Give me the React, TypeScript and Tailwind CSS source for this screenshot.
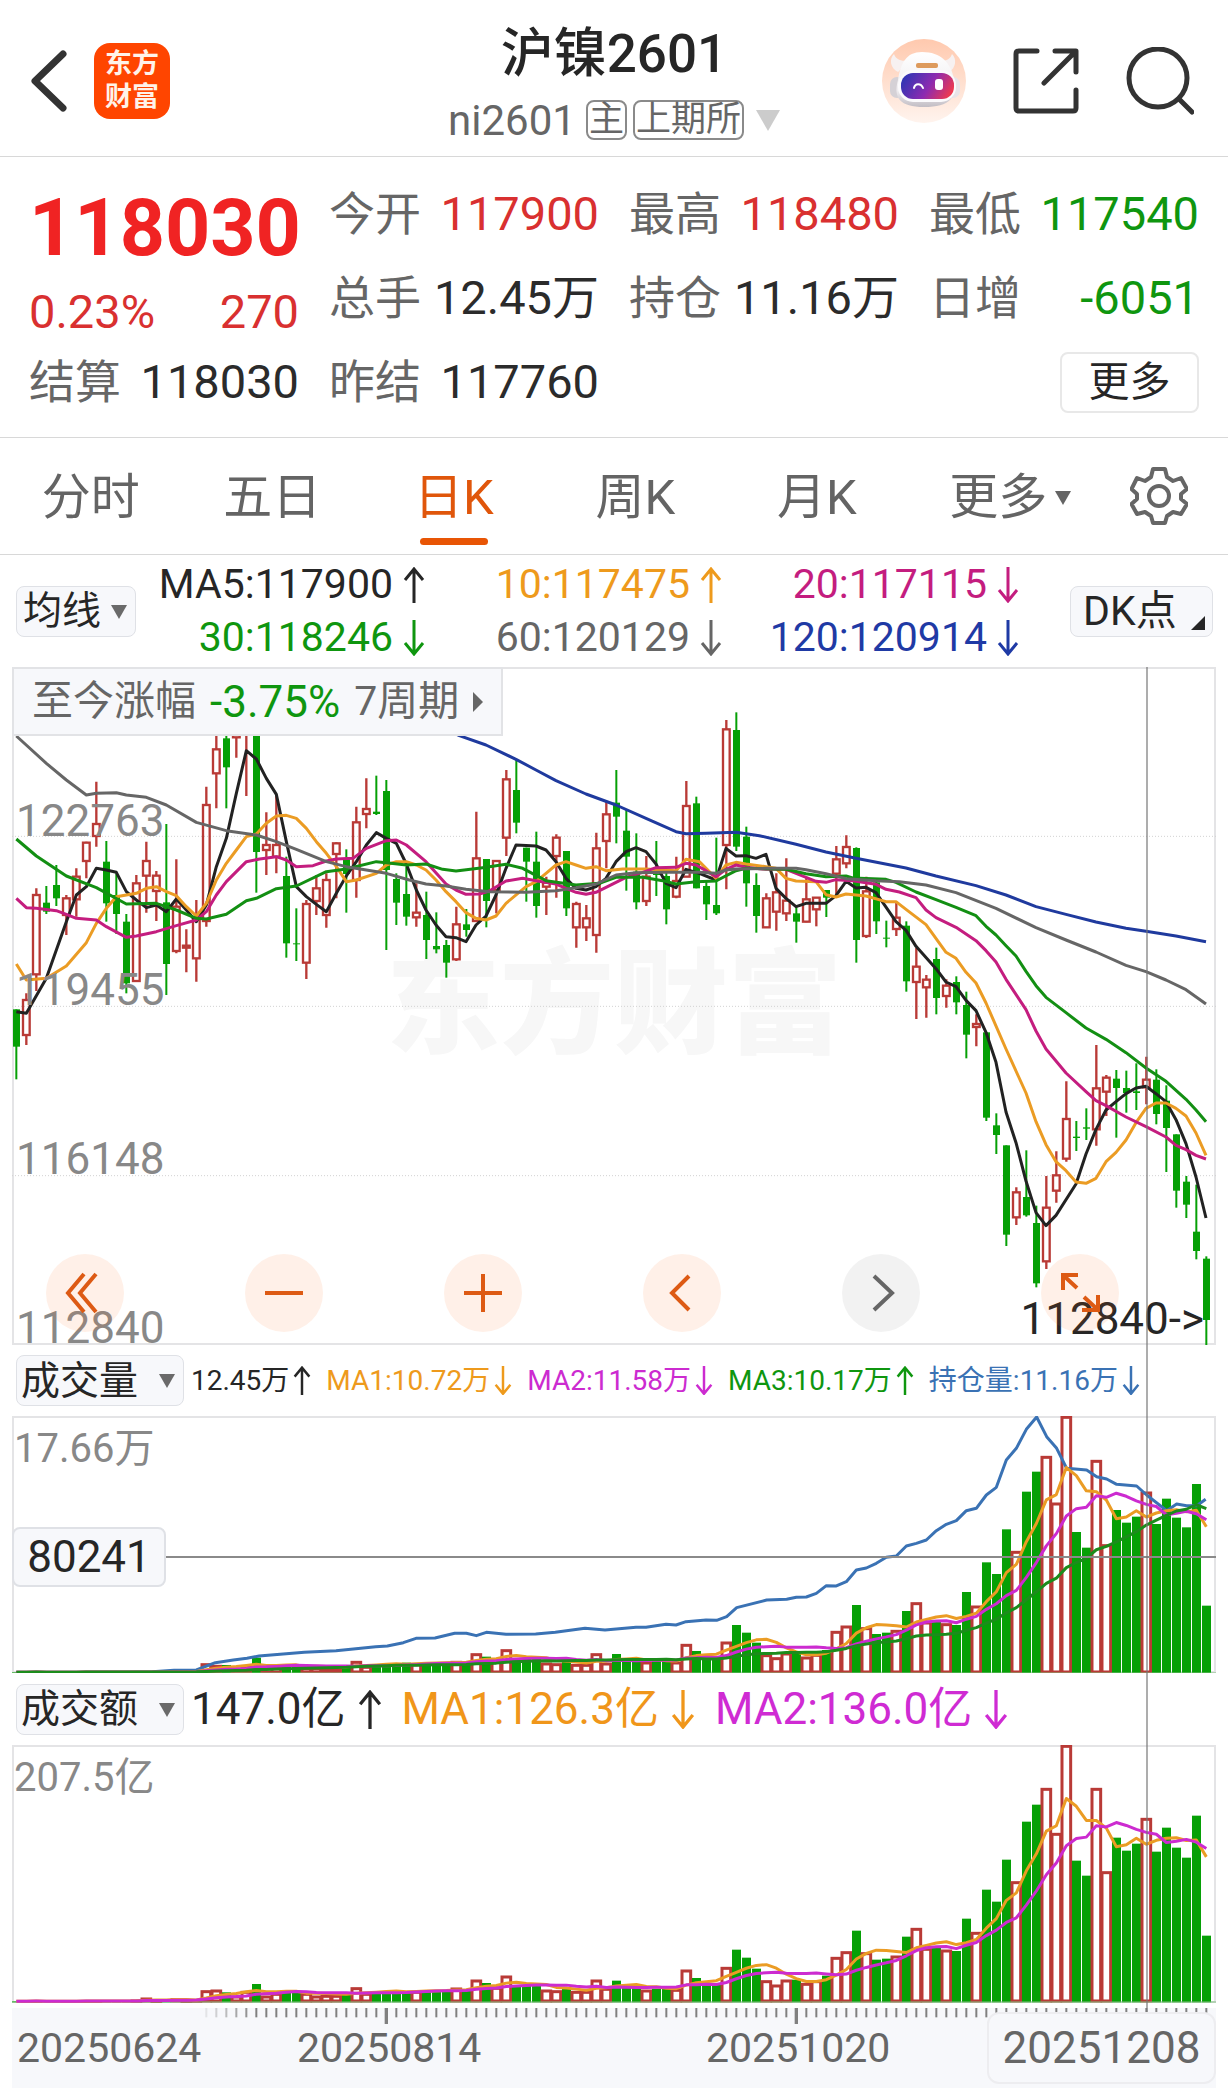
import { useState } from "react";
import type { ReactNode } from "react";

type Candle = [up: 0 | 1, high: number, top: number, bottom: number, low: number];

// Chart space: three units per pixel, one candle every 30 units.
const STEP = 30;
const FIRST = 49;
const xAt = (i: number) => FIRST + STEP * i;

const candles: Candle[] = [
  [0, 1048, 1048, 1160, 1258], [1, 1000, 1020, 1125, 1155], [1, 685, 705, 943, 993], [0, 678, 728, 755, 762],
  [0, 615, 675, 715, 738], [1, 705, 715, 765, 825], [1, 625, 650, 718, 770], [1, 545, 548, 603, 655],
  [1, 365, 492, 528, 560], [0, 543, 605, 730, 785], [0, 640, 705, 762, 822], [0, 762, 785, 970, 1000],
  [1, 645, 670, 963, 963], [1, 545, 603, 647, 758], [1, 633, 647, 693, 783], [0, 492, 727, 912, 1005],
  [1, 598, 740, 873, 880], [1, 808, 857, 863, 937], [1, 720, 775, 895, 965], [1, 380, 435, 783, 800],
  [1, 180, 268, 340, 445], [0, 150, 235, 322, 445], [1, 150, 180, 232, 293], [1, 120, 140, 220, 408],
  [0, 60, 150, 576, 698], [1, 457, 555, 570, 645], [1, 405, 555, 590, 640], [0, 590, 648, 850, 893],
  [0, 745, 850, 853, 903], [1, 720, 732, 908, 957], [1, 645, 685, 723, 765], [1, 640, 660, 765, 803],
  [1, 547, 550, 582, 715], [0, 568, 598, 642, 758], [1, 440, 487, 660, 713], [1, 355, 447, 462, 505],
  [0, 347, 455, 462, 465], [0, 360, 393, 630, 870], [0, 640, 657, 728, 795], [0, 620, 702, 770, 797],
  [1, 670, 758, 772, 800], [0, 695, 765, 840, 897], [0, 757, 858, 868, 880], [0, 840, 855, 908, 953],
  [1, 740, 793, 898, 903], [0, 747, 793, 810, 830], [1, 455, 595, 783, 785], [0, 597, 597, 723, 802],
  [1, 603, 603, 690, 760], [1, 330, 358, 533, 588], [0, 300, 390, 488, 520], [0, 563, 563, 605, 725],
  [0, 515, 605, 738, 773], [1, 650, 668, 680, 765], [1, 523, 533, 588, 713], [0, 573, 573, 745, 768],
  [1, 725, 732, 802, 863], [1, 735, 775, 802, 843], [1, 518, 565, 825, 878], [1, 425, 463, 543, 625],
  [0, 330, 428, 470, 550], [0, 450, 512, 590, 692], [0, 520, 635, 727, 748], [1, 588, 650, 723, 738],
  [0, 543, 640, 645, 708], [0, 635, 648, 748, 793], [1, 590, 663, 710, 715], [1, 363, 438, 650, 650],
  [0, 410, 430, 685, 685], [0, 665, 678, 733, 780], [0, 533, 735, 760, 765], [1, 180, 208, 555, 688],
  [0, 157, 210, 560, 573], [0, 500, 530, 670, 740], [0, 640, 675, 768, 818], [1, 700, 715, 802, 803],
  [1, 640, 697, 755, 812], [1, 595, 722, 760, 783], [0, 740, 760, 785, 848], [1, 650, 718, 785, 787],
  [1, 713, 713, 748, 799], [0, 690, 690, 713, 771], [1, 558, 598, 641, 702], [1, 526, 561, 610, 625],
  [0, 562, 564, 840, 908], [1, 650, 694, 828, 834], [0, 656, 667, 784, 822], [0, 782, 833, 836, 862],
  [1, 725, 773, 807, 828], [0, 784, 797, 964, 995], [1, 863, 920, 966, 1077], [1, 945, 959, 982, 1073],
  [0, 863, 897, 1014, 1063], [1, 958, 977, 1008, 1043], [0, 949, 966, 1027, 1063], [0, 995, 1035, 1124, 1195],
  [1, 1063, 1092, 1101, 1159], [0, 1117, 1117, 1373, 1383], [0, 1360, 1396, 1425, 1482], [0, 1456, 1456, 1724, 1758],
  [1, 1582, 1597, 1672, 1695], [0, 1471, 1611, 1666, 1670], [0, 1637, 1689, 1870, 1882], [1, 1548, 1643, 1804, 1827],
  [1, 1474, 1546, 1592, 1628], [1, 1264, 1377, 1496, 1505], [0, 1383, 1430, 1434, 1473], [0, 1345, 1402, 1406, 1440],
  [1, 1155, 1285, 1408, 1457], [1, 1245, 1253, 1295, 1368], [0, 1230, 1256, 1284, 1433], [0, 1232, 1284, 1299, 1358],
  [0, 1210, 1294, 1299, 1350], [1, 1190, 1259, 1282, 1333], [0, 1228, 1259, 1362, 1393], [0, 1276, 1322, 1404, 1536],
  [0, 1423, 1423, 1592, 1643], [0, 1548, 1565, 1634, 1674], [0, 1574, 1715, 1773, 1798], [0, 1789, 1796, 1980, 2056],
];

const averages: { color: string; points: string }[] = [
  {
    color: "#1f3a9e",
    points:
      "1340,208 1378,227 1458,255 1548,298 1608,330 1668,362 1758,402 1848,435 1938,475 2028,515 2058,521 2118,520 2208,517 2278,527 2388,553 2478,576 2568,595 2718,624 2808,648 2928,677 3018,705 3108,740 3198,763 3288,786 3378,805 3438,814 3528,828 3618,845",
  },
  {
    color: "#222222",
    points:
      "49,1055 79,1060 139,955 199,785 229,705 259,680 289,625 319,630 349,637 379,695 409,720 439,743 469,735 499,755 529,717 559,750 589,785 619,735 649,620 679,535 709,400 739,272 769,297 799,355 829,403 859,545 889,680 919,710 949,733 979,755 1009,700 1039,648 1069,605 1099,555 1129,518 1159,535 1189,550 1219,612 1249,690 1278,750 1308,795 1338,830 1368,833 1398,845 1428,795 1458,768 1488,705 1518,625 1548,555 1608,558 1638,570 1668,605 1698,655 1728,685 1758,690 1788,680 1818,655 1848,605 1878,575 1908,563 1938,575 1968,612 1998,670 2028,683 2058,628 2098,640 2148,660 2178,565 2208,588 2238,587 2268,595 2298,583 2328,685 2358,715 2388,740 2418,730 2478,730 2508,707 2538,664 2568,684 2598,682 2628,698 2688,785 2718,811 2748,859 2808,926 2838,966 2868,980 2898,1021 2928,1052 2958,1117 2988,1207 3018,1356 3048,1448 3078,1563 3108,1658 3138,1697 3168,1666 3228,1572 3258,1482 3288,1408 3318,1350 3348,1325 3378,1301 3408,1284 3438,1279 3468,1301 3498,1325 3528,1379 3558,1451 3588,1551 3618,1674",
  },
  {
    color: "#eb9c24",
    points:
      "49,912 79,960 139,955 199,918 259,848 289,790 319,745 349,710 409,700 439,685 469,680 499,695 529,707 559,740 589,768 619,730 649,660 679,610 709,570 739,530 769,522 799,490 829,468 859,466 889,475 919,505 949,545 979,580 1009,620 1039,665 1069,660 1129,640 1159,615 1189,605 1219,605 1249,615 1278,630 1308,660 1338,695 1368,725 1398,758 1428,775 1458,780 1488,768 1518,730 1578,680 1608,665 1638,640 1668,615 1698,605 1728,615 1758,625 1788,620 1818,632 1868,627 1938,627 2028,632 2058,598 2098,605 2148,655 2178,615 2208,607 2238,612 2298,620 2328,625 2358,655 2388,663 2448,665 2478,704 2508,711 2538,702 2598,708 2658,725 2688,725 2718,748 2778,794 2838,877 2868,895 2898,937 2928,969 2958,1029 3018,1167 3078,1299 3108,1385 3138,1454 3168,1505 3198,1532 3228,1566 3258,1570 3288,1555 3318,1505 3348,1477 3378,1440 3408,1388 3438,1345 3468,1329 3498,1329 3528,1345 3558,1368 3588,1419 3618,1486",
  },
  {
    color: "#c41d7f",
    points:
      "49,715 79,743 109,745 169,752 199,763 229,775 289,780 319,800 379,832 409,828 469,815 529,797 589,780 619,755 649,705 679,665 709,635 739,605 779,597 829,590 859,600 889,620 939,617 979,603 1009,597 1059,595 1099,565 1159,542 1189,540 1219,555 1278,605 1338,672 1368,690 1398,703 1438,702 1468,693 1518,663 1568,655 1608,662 1668,672 1698,685 1728,697 1758,703 1788,697 1848,667 1878,652 1928,637 1968,623 2028,622 2058,610 2088,615 2118,632 2148,650 2178,628 2208,615 2238,622 2298,628 2358,628 2388,640 2448,664 2478,667 2508,659 2558,662 2628,673 2658,688 2698,696 2748,713 2778,750 2808,773 2868,802 2928,842 2958,872 2988,906 3018,958 3078,1049 3108,1113 3138,1167 3198,1239 3258,1295 3288,1322 3318,1337 3378,1371 3438,1400 3498,1431 3528,1456 3558,1469 3588,1486 3618,1497",
  },
  {
    color: "#138f13",
    points:
      "49,537 109,588 199,648 289,683 379,732 469,730 529,750 589,775 619,777 679,763 739,722 769,715 829,686 889,678 979,635 1039,627 1129,605 1159,608 1219,615 1278,612 1328,628 1368,633 1448,623 1518,613 1568,625 1638,662 1728,675 1798,670 1848,652 1928,652 1988,662 2028,672 2088,665 2148,663 2208,632 2238,625 2358,628 2418,641 2478,650 2538,648 2558,654 2658,658 2688,667 2748,696 2808,719 2868,742 2928,767 2958,799 2988,825 3018,857 3048,888 3078,934 3108,977 3138,1012 3198,1058 3258,1104 3318,1138 3378,1178 3438,1224 3498,1264 3558,1318 3588,1350 3618,1385",
  },
  {
    color: "#666666",
    points:
      "49,228 139,310 199,360 259,405 289,400 349,398 379,405 439,412 499,435 589,487 679,512 769,525 829,545 889,568 979,605 1039,620 1159,640 1228,660 1278,672 1338,678 1398,688 1468,695 1578,697 1668,692 1728,683 1788,672 1848,645 1908,638 1998,637 2098,637 2148,640 2178,630 2208,627 2298,625 2388,625 2418,629 2478,641 2538,656 2628,662 2698,665 2778,675 2868,698 2988,745 3108,803 3198,840 3288,876 3378,916 3438,935 3498,960 3558,989 3618,1032",
  },
];

// Bar heights above the base line, in chart units.
const volumes = [
  3, 4, 4, 3, 3, 4, 4, 5, 5, 3, 3, 3, 5, 6, 4, 3, 9, 6, 6, 30, 25, 25, 15, 24, 47, 8, 22, 25, 25, 18, 18, 15, 17, 25,
  37, 22, 25, 28, 30, 32, 30, 32, 32, 32, 37, 32, 60, 50, 40, 72, 45, 43, 43, 32, 30, 35, 28, 28, 60, 32, 58, 38, 38,
  35, 38, 38, 35, 88, 67, 50, 48, 95, 145, 122, 92, 57, 48, 62, 62, 50, 58, 70, 127, 143, 205, 138, 118, 122, 130, 187,
  213, 155, 160, 150, 145, 244, 203, 333, 298, 432, 367, 545, 605, 652, 512, 772, 424, 377, 640, 387, 490, 452, 470,
  545, 448, 524, 467, 438, 568, 203,
];

const amounts = [
  3, 4, 4, 3, 3, 4, 4, 5, 5, 3, 3, 5, 8, 14, 6, 3, 12, 6, 8, 36, 38, 30, 20, 34, 55, 20, 28, 30, 32, 28, 20, 22, 22, 28,
  45, 28, 30, 32, 34, 34, 34, 36, 36, 36, 44, 36, 68, 58, 46, 80, 50, 50, 50, 38, 36, 40, 34, 34, 68, 43, 65, 45, 45,
  38, 41, 41, 40, 98, 73, 58, 55, 106, 158, 134, 101, 66, 53, 68, 68, 58, 66, 80, 136, 153, 215, 150, 128, 131, 140,
  197, 223, 163, 168, 158, 154, 251, 211, 338, 302, 428, 363, 542, 593, 643, 508, 772, 425, 380, 643, 393, 494, 455,
  476, 553, 452, 524, 464, 434, 560, 200,
];

const openInterest =
  "49,769 380,769 457,767 522,763 589,762 646,740 700,732 741,727 777,720 913,709 1008,704 1127,692 1162,690 1210,680 1248,667 1305,666 1364,652 1399,652 1429,659 1459,649 1518,655 1607,654 1666,649 1755,637 1815,642 1908,634 1938,634 1998,625 2028,627 2058,617 2118,612 2150,613 2180,602 2210,575 2300,552 2360,550 2389,544 2419,543 2449,532 2479,509 2509,510 2539,497 2569,462 2599,456 2629,442 2659,424 2689,420 2719,390 2749,382 2779,372 2809,344 2839,325 2869,314 2899,284 2929,277 2959,237 2989,214 3019,132 3049,97 3079,40 3110,3 3140,62 3170,97 3200,157 3260,162 3290,182 3320,189 3350,205 3410,210 3440,237 3500,284 3530,264 3560,269 3590,269 3617,250";

function movingAverage(values: number[], span: number) {
  return values
    .map((_, i) => {
      const part = values.slice(Math.max(0, i - span + 1), i + 1);
      const mean = part.reduce((sum, v) => sum + v, 0) / part.length;
      return `${xAt(i)},${772 - mean}`;
    })
    .join(" ");
}

function Line({ points, color }: { points: string; color: string }) {
  return <polyline points={points} fill="none" stroke={color} strokeWidth="9" strokeLinejoin="round" />;
}

function PriceChart() {
  return (
    <svg viewBox="36 21 3612 2034" className="relative block w-full" role="img" aria-label="日K线图">
      {[529, 1039, 1547].map((y) => (
        <line key={y} x1="36" x2="3648" y1={y} y2={y} stroke="#d2d2d2" strokeWidth="3" strokeDasharray="3 6" />
      ))}
      {candles.map(([up, high, top, bottom, low], i) => {
        const x = xAt(i);
        return up ? (
          <g key={i} stroke="#b93a36" strokeWidth="7" fill="none">
            <path d={`M${x} ${high}V${top}M${x} ${bottom}V${low}`} />
            <rect x={x - 10} y={top} width="20" height={Math.max(bottom - top, 3)} />
          </g>
        ) : (
          <g key={i} fill="#06a006">
            <rect x={x - 3} y={high} width="6" height={low - high} />
            <rect x={x - 10} y={top} width="21" height={bottom - top} />
          </g>
        );
      })}
      {averages.map((a) => (
        <Line key={a.color} {...a} />
      ))}
    </svg>
  );
}

function BarChart({ values, label, children }: { values: number[]; label: string; children: ReactNode }) {
  return (
    <svg viewBox="36 0 3612 772" className="relative block w-full" role="img" aria-label={label}>
      {values.map((h, i) =>
        candles[i][0] ? (
          <rect key={i} x={xAt(i) - 13} y={772 - h + 4} width="26" height={Math.max(h - 8, 1)} fill="#fff" stroke="#b93a36" strokeWidth="9" />
        ) : (
          <rect key={i} x={xAt(i) - 13} y={772 - h} width="27" height={h} fill="#06a006" />
        ),
      )}
      <line x1="36" x2="3648" y1="771" y2="771" stroke="#7fbf7f" strokeWidth="3" />
      {children}
    </svg>
  );
}

function Caret({ className }: { className: string }) {
  return (
    <svg viewBox="0 0 16 14" className={className} aria-hidden="true">
      <path d="M0 0H16L8 14Z" fill="currentColor" />
    </svg>
  );
}

// Value followed by an arrow that shows the direction of its last change.
function Trend({ text, rising, size }: { text: string; rising?: boolean; size: string }) {
  return (
    <span className="inline-flex items-center">
      {text}
      <svg viewBox="0 0 22 36" className={size} fill="none" stroke="currentColor" strokeWidth="3" role="img" aria-label={rising ? "上升" : "下降"}>
        <path d={rising ? "M11 36V3M2 13L11 2L20 13" : "M11 0V33M2 23L11 34L20 23"} />
      </svg>
    </span>
  );
}

function Picker({ label, options, className }: { label: string; options: string[]; className: string }) {
  return (
    <div className="relative shrink-0">
      <select
        aria-label={label}
        className={`block h-[51px] appearance-none rounded-lg border border-[#dfe1e6] bg-[#f7f8fb] text-[39px] leading-[48px] text-[#262626] outline-none ${className}`}
      >
        {options.map((o) => (
          <option key={o}>{o}</option>
        ))}
      </select>
      <Caret className="pointer-events-none absolute top-[19px] right-[9px] w-4 text-[#6a6a6a]" />
    </div>
  );
}

function Stat({ label, value, tone = "text-[#2b2b2b]" }: { label: string; value: string; tone?: string }) {
  return (
    <div className="flex items-center justify-between whitespace-nowrap text-[46px] leading-[84px]">
      <span className="text-[#666]">{label}</span>
      <span className={`text-[47px] ${tone}`}>{value}</span>
    </div>
  );
}

function Robot() {
  return (
    <svg viewBox="0 0 84 84" className="block size-[84px]" aria-hidden="true">
      <defs>
        <linearGradient id="halo" x1="0" y1="0" x2="0" y2="1">
          <stop offset="0" stopColor="#ffc9ae" />
          <stop offset="1" stopColor="#fff4ee" />
        </linearGradient>
        <linearGradient id="visor" x1="0" y1="0.3" x2="1" y2="0.6">
          <stop offset="0" stopColor="#2f35b4" />
          <stop offset="0.55" stopColor="#8d2bb0" />
          <stop offset="1" stopColor="#ee3a50" />
        </linearGradient>
        <linearGradient id="shell" x1="0" y1="0" x2="0" y2="1">
          <stop offset="0" stopColor="#ffffff" />
          <stop offset="0.7" stopColor="#efedf0" />
          <stop offset="1" stopColor="#c2bdc4" />
        </linearGradient>
      </defs>
      <circle cx="42" cy="42" r="42" fill="url(#halo)" />
      <path d="M12 15C7 20 8 29 16 33L28 21C20 23 14 21 12 15ZM70 15C75 20 74 29 67 33L56 21C63 23 68 21 70 15Z" fill="#f7f1f1" />
      <rect x="8" y="38" width="14" height="21" rx="7" fill="#d5d1d6" />
      <rect x="63" y="38" width="15" height="21" rx="7" fill="#e8e4e8" />
      <path d="M40 13C59 13 69 24 72 40C76 58 68 68 42 68C18 68 11 59 16 41C19 24 24 13 40 13Z" fill="url(#shell)" />
      <rect x="34" y="24" width="22" height="5" rx="2" fill="#dd9a5c" />
      <rect x="16" y="31" width="58" height="32" rx="15" fill="#fbfafc" />
      <rect x="19" y="34" width="53" height="26" rx="12" fill="url(#visor)" />
      <path d="M32 49C33 44 39 44 41 49" fill="none" stroke="#fff" strokeWidth="2" strokeLinecap="round" />
      <rect x="53" y="40" width="8" height="11" rx="3" fill="#fff" />
    </svg>
  );
}

function Gear() {
  return (
    <svg viewBox="0 0 58 60" className="block w-[58px]" fill="none" stroke="#666" strokeWidth="4" strokeLinejoin="round" aria-hidden="true">
      <path d="M23 3H35L37 11L43 15L51 12L57 23L51 28V33L57 38L51 48L43 46L37 50L35 57H23L21 50L15 46L7 48L1.500 38L7 33V28L1.500 23L7 12L15 15L21 11Z" />
      <circle cx="29" cy="30" r="10" />
    </svg>
  );
}

const roundIcons: { name: string; d: string; muted?: boolean }[] = [
  { name: "最早", d: "M38 20L22 39L38 58M50 20L34 39L50 58" },
  { name: "缩小", d: "M20 39H58" },
  { name: "放大", d: "M20 39H58M39 20V58" },
  { name: "向左", d: "M46 22L29 39L46 56" },
  { name: "向右", d: "M32 22L50 39L32 56", muted: true },
  { name: "全屏", d: "M22 36V21H37M23 22L36 34M57 41V56H41M56 55L43 43" },
];

const legend = [
  { text: "MA5:117900", rising: true, tone: "text-[#262626]" },
  { text: "10:117475", rising: true, tone: "text-[#ee9a1c]" },
  { text: "20:117115", tone: "text-[#c41d7f]" },
  { text: "30:118246", tone: "text-[#0f960f]" },
  { text: "60:120129", tone: "text-[#666]" },
  { text: "120:120914", tone: "text-[#1f3aa5]" },
];

const volumeLegend = [
  { text: "12.45万", rising: true, tone: "text-[#262626]" },
  { text: "MA1:10.72万", tone: "text-[#ee9a1c]" },
  { text: "MA2:11.58万", tone: "text-[#cc2bd0]" },
  { text: "MA3:10.17万", rising: true, tone: "text-[#0f960f]" },
  { text: "持仓量:11.16万", tone: "text-[#3a72b4]" },
];

const tabs = ["分时", "五日", "日K", "周K", "月K", "更多"];

export default function App() {
  const [tab, setTab] = useState("日K");

  return (
    <main className="min-h-screen bg-white font-[Roboto,'Noto_Sans_CJK_SC',sans-serif] text-[#262626]">
      <header className="relative flex h-[157px] items-center justify-between border-b border-[#d8d8d8] pt-[5px] pr-[34px] pl-[31px]">
        <div className="flex items-center gap-[27px]">
          <button type="button" aria-label="返回">
            <svg viewBox="0 0 36 62" className="block w-9" fill="none" stroke="#333" strokeWidth="7" strokeLinecap="round" aria-hidden="true">
              <path d="M32 4L4 31L32 58" strokeLinejoin="round" />
            </svg>
          </button>
          <a href="#home" className="grid size-[76px] place-content-center rounded-2xl bg-[#ff4500] text-center text-[27px] leading-[33px] font-bold text-[#fff3ea]">
            <span>东方</span>
            <span>财富</span>
          </a>
        </div>
        <div className="absolute inset-x-0 top-5 mx-auto w-fit text-center">
          <h1 className="text-[53px] leading-[68px] font-medium text-[#262626]">沪镍2601</h1>
          <button type="button" className="flex h-16 items-center gap-[6px] text-[#666]">
            <span className="mr-1 text-[42px]">ni2601</span>
            <span className="rounded-lg border-2 border-[#8a8a8a] px-px text-[35px] leading-9">主</span>
            <span className="rounded-lg border-2 border-[#8a8a8a] px-px text-[35px] leading-9">上期所</span>
            <Caret className="ml-[6px] w-6 text-[#ccc]" />
          </button>
        </div>
        <div className="flex items-center gap-[47px]">
          <button type="button" aria-label="智能助手">
            <Robot />
          </button>
          <button type="button" aria-label="分享">
            <svg viewBox="0 0 66 66" className="block w-[66px]" fill="none" stroke="#333" strokeWidth="5" strokeLinecap="round" strokeLinejoin="round" aria-hidden="true">
              <path d="M24 3H6Q3 3 3 6V60Q3 63 6 63H60Q63 63 63 60V42M42 3H63V24M62 4L31 35" />
            </svg>
          </button>
          <button type="button" aria-label="搜索">
            <svg viewBox="0 0 68 68" className="block w-[68px]" fill="none" stroke="#333" strokeWidth="5" strokeLinecap="round" aria-hidden="true">
              <circle cx="32" cy="31" r="29" />
              <path d="M53 52L66 65" />
            </svg>
          </button>
        </div>
      </header>

      <section className="grid auto-rows-[84px] grid-cols-4 gap-x-[30px] border-b border-[#d8d8d8] px-[29px] pt-[15px] pb-[13px]">
        <div className="row-span-2 pt-[6px] text-[#d93030]">
          <div className="text-[79px] leading-[100px] font-bold text-[#f02323]">118030</div>
          <div className="flex justify-between text-[47px] leading-[68px]">
            <span>0.23%</span>
            <span>270</span>
          </div>
        </div>
        <Stat label="今开" value="117900" tone="text-[#d93030]" />
        <Stat label="最高" value="118480" tone="text-[#d93030]" />
        <Stat label="最低" value="117540" tone="text-[#0f960f]" />
        <Stat label="总手" value="12.45万" />
        <Stat label="持仓" value="11.16万" />
        <Stat label="日增" value="-6051" tone="text-[#0f960f]" />
        <Stat label="结算" value="118030" />
        <Stat label="昨结" value="117760" />
        <button type="button" className="col-start-4 h-[61px] w-[139px] self-center justify-self-end rounded-lg border-2 border-[#e8e8e8] text-[41px] leading-[54px]">
          更多
        </button>
      </section>

      <nav className="flex h-[117px] items-center border-b border-[#d8d8d8]">
        {tabs.map((t) => (
          <button
            key={t}
            type="button"
            onClick={() => setTab(t)}
            className={`relative h-full flex-1 pt-1 text-[49px] ${t === tab ? "text-[#e0560b]" : "text-[#646464]"}`}
          >
            <span className="relative">
              {t}
              {t === "更多" && <Caret className="absolute top-1/2 -right-6 w-4 -translate-y-1/2" />}
            </span>
            {t === tab && <span className="absolute inset-x-0 bottom-[9px] mx-auto h-[7px] w-[68px] rounded-full bg-[#e85505]" />}
          </button>
        ))}
        <button type="button" aria-label="设置" className="flex w-[139px] justify-center">
          <Gear />
        </button>
      </nav>

      <div className="flex h-[112px] items-center pr-[15px] pl-4">
        <Picker label="均线" options={["均线"]} className="w-[120px] pl-[6px]" />
        <ul className="grid flex-1 grid-cols-[1fr_297px_297px] text-right text-[41px] leading-[53px] whitespace-nowrap">
          {legend.map((l) => (
            <li key={l.text} className={l.tone}>
              <Trend text={l.text} rising={l.rising} size="ml-[10px] w-[22px]" />
            </li>
          ))}
        </ul>
        <button type="button" className="relative ml-[51px] h-[51px] w-[143px] rounded-lg border border-[#dfe1e6] bg-[#f7f8fb] pl-3 text-left text-[41px] leading-[46px]">
          DK点
          <svg viewBox="0 0 14 14" className="absolute right-[7px] bottom-[6px] w-[14px]" aria-hidden="true">
            <path d="M14 0V14H0Z" fill="#262626" />
          </svg>
        </button>
      </div>

      <div className="relative px-3">
        <section className="relative inset-ring-2 inset-ring-[#e4e4e6]">
          <div className="absolute inset-x-0 top-[41%] text-center text-[114px] leading-[120px] font-black text-[#f7f7f7]" aria-hidden="true">
            东方财富
          </div>
          <PriceChart />
          <div className="absolute inset-0 flex flex-col pl-1 text-[44px] leading-[30px] text-[#888]">
            <span className="flex flex-1 items-end">122763</span>
            <span className="flex flex-1 items-end">119455</span>
            <span className="flex flex-1 items-end">116148</span>
            <span className="flex flex-1 items-end pb-[2px]">112840</span>
          </div>
          <button type="button" className="absolute top-0 left-0 flex h-[69px] items-center border-2 border-[#e2e3e6] bg-[#f7f8fb] px-[18px] text-[41px] text-[#666]">
            至今涨幅
            <span className="mx-[14px] text-[44px] text-[#0f960f]">-3.75%</span>
            7周期
            <svg viewBox="0 0 10 20" className="ml-[14px] w-[10px]" aria-hidden="true">
              <path d="M0 0L10 10L0 20Z" fill="#666" />
            </svg>
          </button>
          <span className="absolute right-3 bottom-1 text-[44px] leading-[44px] text-[#262626]">112840-&gt;</span>
          <div className="absolute right-[97px] bottom-[13px] left-[34px] flex justify-between">
            {roundIcons.map((b) => (
              <button
                key={b.name}
                type="button"
                aria-label={b.name}
                className={`rounded-full ${b.muted ? "bg-[#000]/5 text-[#666]" : "bg-[#fb6a1e]/10 text-[#dd5a14]"}`}
              >
                <svg viewBox="0 0 78 78" className="block w-[78px]" fill="none" stroke="currentColor" strokeWidth="4" aria-hidden="true">
                  <path d={b.d} />
                </svg>
              </button>
            ))}
          </div>
        </section>

        <div className="flex h-[71px] items-center gap-[7px] pl-1">
          <Picker label="指标一" options={["成交量"]} className="w-[168px] pl-1" />
          <ul className="mr-[76px] flex flex-1 justify-between text-[28px] leading-[50px] whitespace-nowrap">
            {volumeLegend.map((l) => (
              <li key={l.text} className={l.tone}>
                <Trend text={l.text} rising={l.rising} size="ml-1 w-[18px]" />
              </li>
            ))}
          </ul>
        </div>

        <section className="relative inset-ring-2 inset-ring-[#e4e4e6]">
          <BarChart values={volumes} label="成交量">
            <Line points={openInterest} color="#3a72b4" />
            <Line points={movingAverage(volumes, 5)} color="#eb9c24" />
            <Line points={movingAverage(volumes, 10)} color="#cc2bd0" />
            <Line points={movingAverage(volumes, 20)} color="#1c8c1c" />
          </BarChart>
          <span className="absolute top-[9px] left-[2px] text-[40px] leading-[48px] text-[#888]">17.66万</span>
          <div className="absolute inset-x-0 top-[43%] flex items-center">
            <span className="h-[60px] w-[154px] rounded-lg border-2 border-[#dfe1e6] bg-[#f7f8fb] text-center text-[44px] leading-[56px]">80241</span>
            <span className="h-[2px] flex-1 bg-[#8a8a8a]" />
          </div>
        </section>

        <div className="flex h-[72px] items-center gap-[7px] pl-1">
          <Picker label="指标二" options={["成交额"]} className="w-[168px] pl-1" />
          <ul className="flex gap-5 text-[44px] leading-[50px] whitespace-nowrap">
            <li>
              <Trend text="147.0亿" rising size="ml-3 w-6" />
            </li>
            <li className="text-[#f0961a]">
              <Trend text="MA1:126.3亿" size="ml-3 w-6" />
            </li>
            <li className="text-[#cf2bd3]">
              <Trend text="MA2:136.0亿" size="ml-3 w-6" />
            </li>
          </ul>
        </div>

        <section className="relative inset-ring-2 inset-ring-[#e4e4e6]">
          <BarChart values={amounts} label="成交额">
            <Line points={movingAverage(amounts, 5)} color="#eb9c24" />
            <Line points={movingAverage(amounts, 10)} color="#cc2bd0" />
          </BarChart>
          <span className="absolute top-[9px] left-[2px] text-[40px] leading-[48px] text-[#888]">207.5亿</span>
        </section>

        <footer className="mt-[5px] bg-[#f7f8fb] pb-[5px]">
          <svg viewBox="36 0 3612 48" className="block w-full" aria-hidden="true">
            {candles.map((_, i) => {
              const major = i === 37 || i === 78;
              return i < 19 ? null : (
                <rect
                  key={i}
                  x={xAt(i) - (major ? 5 : 3)}
                  y="0"
                  width={major ? 10 : 6}
                  height={major ? 48 : 28}
                  fill="#808080"
                  opacity={Math.min(1, (i - 18) / 6)}
                />
              );
            })}
          </svg>
          <div className="-mt-3 grid grid-cols-[285fr_409fr_281fr_229fr] items-center text-[41px] leading-[68px] text-[#666]">
            <time className="pl-[5px]">20250624</time>
            <time>20250814</time>
            <time>20251020</time>
            <time className="relative rounded-xl border-2 border-[#ededf0] bg-[#f7f8fb] text-center text-[44px]">20251208</time>
          </div>
        </footer>
        <div className="pointer-events-none absolute top-0 bottom-[77px] left-[93.3%] w-[2px] bg-[#777]/60" />
      </div>
    </main>
  );
}
